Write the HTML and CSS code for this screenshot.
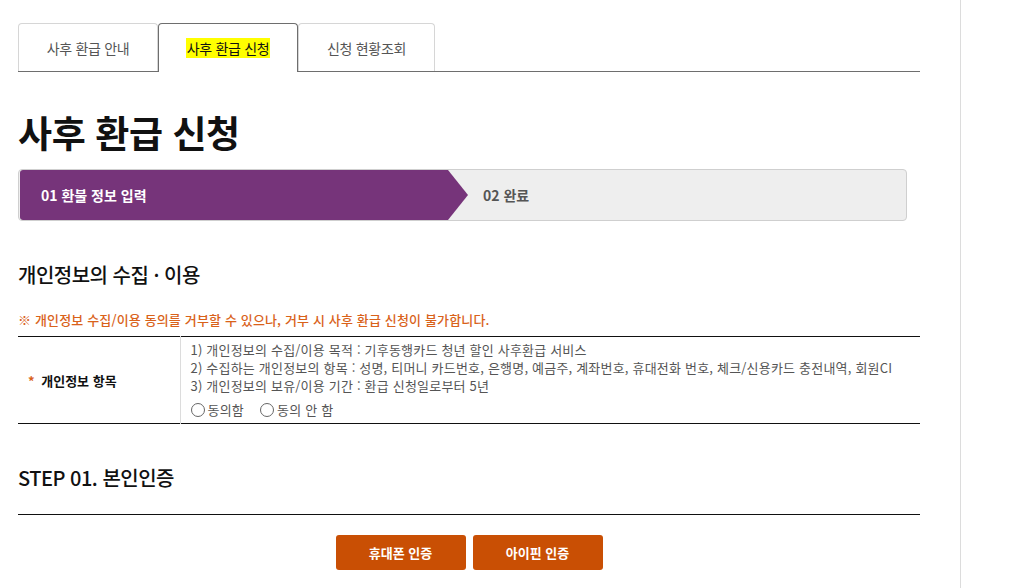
FILE: index.html
```
<!DOCTYPE html>
<html lang="ko">
<head>
    <meta charset="UTF-8">
    <title>사후 환급 신청</title>
    <link rel="stylesheet" href="styles.css">
</head>
<body>
    <div class="page">
        <div class="content">
            <ul class="tabs">
                <li class="tab">사후 환급 안내</li>
                <li class="tab active"><mark>사후 환급 신청</mark></li>
                <li class="tab narrow">신청 현황조회</li>
            </ul>

            <h1 class="page-title">사후 환급 신청</h1>

            <div class="steps">
                <div class="step current">01 환불 정보 입력</div>
                <div class="step">02 완료</div>
            </div>

            <h2 class="section-title">개인정보의 수집 · 이용</h2>
            <p class="notice">※ 개인정보 수집/이용 동의를 거부할 수 있으나, 거부 시 사후 환급 신청이 불가합니다.</p>

            <table class="agree-table">
                <tr>
                    <th><span class="req">*</span> 개인정보 항목</th>
                    <td>
                        <p>1) 개인정보의 수집/이용 목적 : 기후동행카드 청년 할인 사후환급 서비스</p>
                        <p>2) 수집하는 개인정보의 항목 : 성명, 티머니 카드번호, 은행명, 예금주, 계좌번호, 휴대전화 번호, 체크/신용카드 충전내역, 회원CI</p>
                        <p>3) 개인정보의 보유/이용 기간 : 환급 신청일로부터 5년</p>
                        <div class="radios">
                            <label><span class="radio"></span>동의함</label>
                            <label><span class="radio"></span>동의 안 함</label>
                        </div>
                    </td>
                </tr>
            </table>

            <h2 class="section-title step-title">STEP 01. 본인인증</h2>

            <div class="auth-buttons">
                <button class="btn">휴대폰 인증</button>
                <button class="btn">아이핀 인증</button>
            </div>
        </div>
    </div>
</body>
</html>
```

FILE: styles.css
```
* {
    margin: 0;
    padding: 0;
    box-sizing: border-box;
}

html, body {
    height: 100%;
    background-color: #fff;
    font-family: "Noto Sans CJK KR", "Noto Sans", sans-serif;
    color: #222;
    overflow: hidden;
}

.page {
    width: 961px;
    height: 100%;
    border-right: 1px solid #dcdcdc;
}

.content {
    width: 920px;
    padding-left: 18px;
    padding-top: 23px;
}

/* Tabs */
.tabs {
    list-style: none;
    display: flex;
    border-bottom: 1px solid #6e6e6e;
    height: 49px;
}

.tab {
    width: 140px;
    height: 48px;
    border: 1px solid #d6d6d6;
    border-bottom: none;
    border-radius: 4px 4px 0 0;
    display: flex;
    align-items: center;
    justify-content: center;
    font-size: 14px;
    color: #555;
    letter-spacing: -0.3px;
}

.tab.narrow {
    width: 137px;
}

.tab.active {
    height: 49px;
    border-color: #6e6e6e;
    background-color: #fff;
    color: #111;
    margin-bottom: -1px;
}

.tab mark {
    background-color: #ffff00;
    color: #111;
    padding: 0 1px;
}

/* Title */
.page-title {
    font-size: 37px;
    font-weight: 700;
    letter-spacing: -0.4px;
    line-height: 52px;
    margin-top: 34px;
    margin-bottom: 11px;
    color: #111;
}

/* Steps */
.steps {
    display: flex;
    width: 889px;
    height: 52px;
    border: 1px solid #cfcfcf;
    border-radius: 4px;
    background-color: #eeeeee;
    overflow: hidden;
}

.step {
    display: flex;
    align-items: center;
    font-size: 14px;
    font-weight: 700;
    color: #555;
    padding-left: 16px;
}

.step.current {
    position: relative;
    width: 428px;
    margin-left: 1px;
    padding-left: 21px;
    background-color: #76347a;
    color: #fff;
    border-radius: 3px 0 0 3px;
}

.step.current::after {
    content: "";
    position: absolute;
    right: -20px;
    top: 0;
    border-top: 25px solid transparent;
    border-bottom: 25px solid transparent;
    border-left: 20px solid #76347a;
}

.step + .step {
    padding-left: 35px;
}

/* Sections */
.section-title {
    font-size: 20px;
    font-weight: 500;
    color: #111;
    letter-spacing: -0.5px;
    line-height: 30px;
    margin-top: 39px;
}

.notice {
    font-size: 13px;
    font-weight: 500;
    color: #d9621a;
    margin-top: 21px;
    line-height: 18px;
    letter-spacing: 0.15px;
}

.agree-table {
    width: 902px;
    border-collapse: collapse;
    border-top: 1px solid #111;
    border-bottom: 1px solid #111;
    margin-top: 7px;
}

.agree-table th {
    width: 162px;
    border-right: 1px solid #dcdcdc;
    text-align: left;
    padding-left: 10px;
    font-size: 13px;
    font-weight: 700;
    color: #111;
}

.agree-table .req {
    color: #d9621a;
    margin-right: 3px;
}

.agree-table td {
    padding: 4px 10px 4px 10px;
    font-size: 13px;
    color: #555;
    line-height: 18px;
    letter-spacing: 0.2px;
}

.radios {
    display: flex;
    gap: 16px;
    margin-top: 6px;
}

.radios label {
    display: flex;
    align-items: center;
}

.radio {
    width: 14px;
    height: 14px;
    border: 1px solid #666;
    border-radius: 50%;
    margin-right: 3px;
}

.step-title {
    margin-top: 39px;
    padding-bottom: 21px;
    border-bottom: 1px solid #111;
    width: 902px;
}

.auth-buttons {
    display: flex;
    justify-content: center;
    gap: 7px;
    width: 902px;
    margin-top: 20px;
}

.btn {
    width: 130px;
    height: 35px;
    border: none;
    border-radius: 3px;
    background-color: #c94f04;
    color: #fff;
    font-family: "Noto Sans CJK KR", sans-serif;
    font-size: 13px;
    font-weight: 700;
}
```
